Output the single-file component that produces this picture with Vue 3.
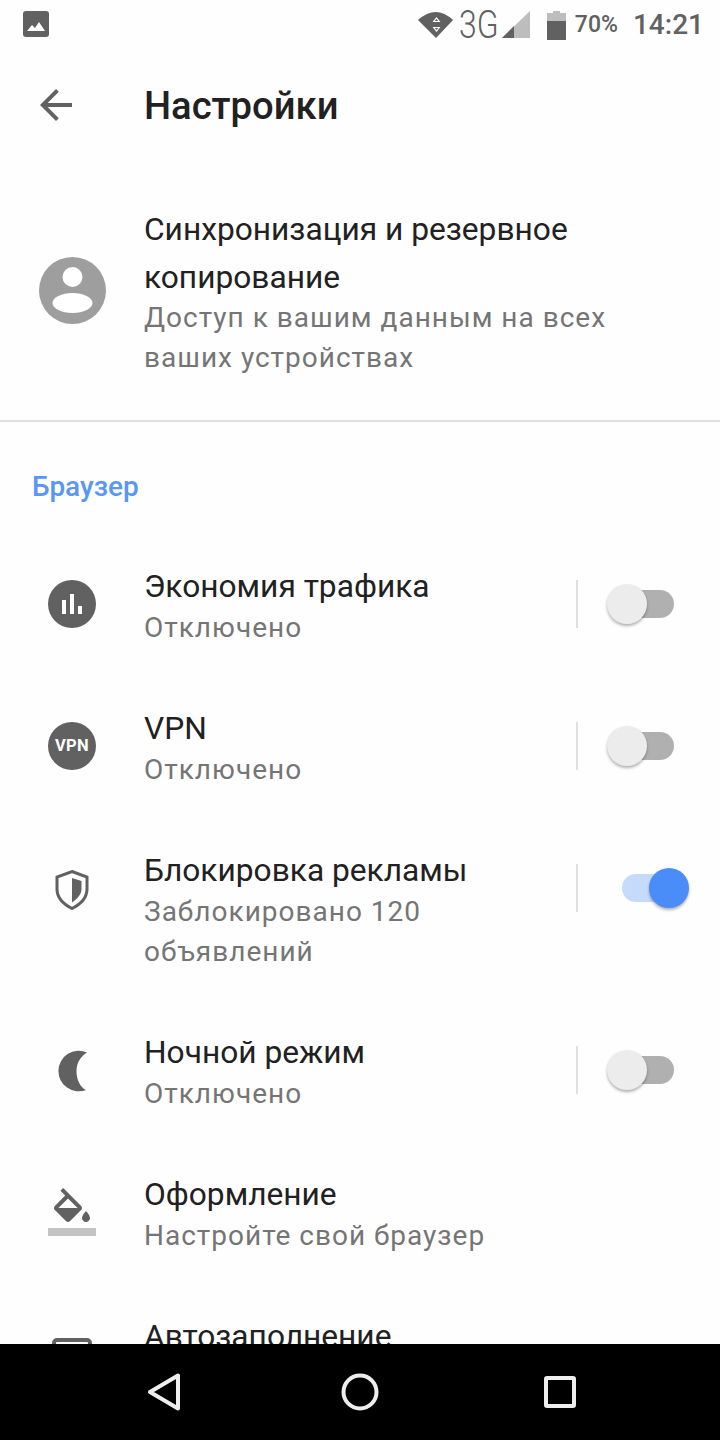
<script setup>
const rows = [
  { key: 'data', title: 'Экономия трафика', sub: 'Отключено', toggle: 'off' },
  { key: 'vpn', title: 'VPN', sub: 'Отключено', toggle: 'off' },
  { key: 'ads', title: 'Блокировка рекламы', sub: 'Заблокировано 120 объявлений', toggle: 'on' },
  { key: 'night', title: 'Ночной режим', sub: 'Отключено', toggle: 'off' },
  { key: 'theme', title: 'Оформление', sub: 'Настройте свой браузер' },
  { key: 'fill', title: 'Автозаполнение' }
]
</script>

<template>
  <div class="screen">
    <header class="status">
      <svg class="st-pic" width="26" height="26" viewBox="0 0 26 26">
        <rect width="26" height="26" rx="3" fill="#616161" />
        <path d="M4 20l5-6 3 3 4-6 6 9z" fill="#fff" />
      </svg>
      <div class="st-right">
        <svg class="st-wifi" width="36" height="28" viewBox="0 0 36 28">
          <path d="M0 9Q18-7 35 9L18 27z" fill="#616161" />
          <path d="M18.500 6l4 5h-8zM18.500 21l4-5h-8z" fill="#fff" />
          <path d="M18.500 8l1.800 2h-3.600zM18.500 19l1.800-2h-3.600z" fill="#616161" />
        </svg>
        <span class="st-net">3G</span>
        <svg class="st-sig" width="28" height="28" viewBox="0 0 28 28">
          <path d="M28 0V27H0z" fill="#bdbdbd" />
          <path d="M12 15V27H0z" fill="#616161" />
        </svg>
        <svg class="st-bat" width="19" height="29" viewBox="0 0 19 29">
          <path d="M6 0h7v2h6v8H0V2h6z" fill="#bdbdbd" />
          <rect y="10" width="19" height="19" fill="#616161" />
        </svg>
        <span class="st-pct">70%</span>
        <span class="st-time">14:21</span>
      </div>
    </header>

    <main class="content">
      <div class="toolbar">
        <svg class="back" width="48" height="48" viewBox="0 0 24 24">
          <path d="M20 11H7.830l5.590-5.590L12 4l-8 8 8 8 1.410-1.410L7.830 13H20v-2z" fill="#616161" />
        </svg>
        <h1 class="title">Настройки</h1>
      </div>

      <section class="sync">
        <svg class="avatar" width="67" height="67" viewBox="0 0 67 67">
          <circle cx="33.500" cy="33.500" r="33.500" fill="#9e9e9e" />
          <circle cx="33.500" cy="20" r="10" fill="#fff" />
          <ellipse cx="33.500" cy="46" rx="20" ry="10" fill="#fff" />
        </svg>
        <div class="sync-text">
          <div class="sync-title">Синхронизация и резервное копирование</div>
          <div class="sub sync-sub">Доступ к вашим данным на всех ваших устройствах</div>
        </div>
      </section>

      <div class="rule"></div>
      <div class="label">Браузер</div>

      <div v-for="r in rows" :key="r.key" class="row">
        <div class="icon">
          <svg v-if="r.key === 'data'" width="48" height="48" viewBox="0 0 48 48">
            <circle cx="24" cy="24" r="24" fill="#616161" />
            <path d="M14 20h4v14h-4zM22 14h4v20h-4zM30 26h4v8h-4z" fill="#fff" />
          </svg>
          <div v-else-if="r.key === 'vpn'" class="vpn">VPN</div>
          <svg v-else-if="r.key === 'ads'" width="48" height="48" viewBox="0 0 48 48">
            <path d="M24 7.500l15 5.500v12c0 8.500-6 15-15 19.500-9-4.500-15-11-15-19.500V13z" fill="none" stroke="#616161" stroke-width="3" />
            <path d="M24 14l9.500 3v8c0 5-4 10-9.500 13.500z" fill="#616161" />
          </svg>
          <svg v-else-if="r.key === 'night'" width="48" height="48" viewBox="0 0 48 48">
            <path d="M39 6.500A20.300 20.300 0 1 0 38 44C32 41 28.500 33.500 28.500 25S33 10 39 6.500z" fill="#616161" />
          </svg>
          <svg v-else-if="r.key === 'theme'" width="48" height="48" viewBox="0 0 24 24">
            <path d="M16.560 8.940L7.620 0 6.210 1.410l2.380 2.380-5.150 5.150c-.59.59-.59 1.540 0 2.120l5.500 5.500c.29.29.68.44 1.060.44s.77-.15 1.060-.44l5.500-5.500c.59-.58.59-1.530 0-2.120zM5.210 10L10 5.210 14.790 10H5.210zM19 11.500s-2 2.170-2 3.500c0 1.100.9 2 2 2s2-.9 2-2c0-1.330-2-3.500-2-3.500z" fill="#616161" />
            <rect y="20" width="24" height="4" fill="#c4c4c4" />
          </svg>
          <svg v-else width="48" height="48" viewBox="0 0 48 48">
            <rect x="6" y="10" width="36" height="30" rx="3" fill="none" stroke="#616161" stroke-width="4" />
          </svg>
        </div>
        <div class="text">
          <div class="row-title">{{ r.title }}</div>
          <div v-if="r.sub" class="sub">{{ r.sub }}</div>
        </div>
        <div v-if="r.toggle" class="ctrl">
          <span class="sep"></span>
          <span class="switch" :class="r.toggle">
            <span class="thumb"></span>
          </span>
        </div>
      </div>
    </main>

    <nav class="nav">
      <svg width="44" height="40" viewBox="0 0 44 40">
        <path d="M40 3.500V36.500L12 20z" fill="none" stroke="#eee" stroke-width="4" stroke-linejoin="round" />
      </svg>
      <svg width="40" height="40" viewBox="0 0 40 40">
        <circle cx="20" cy="20" r="16.500" fill="none" stroke="#eee" stroke-width="4" />
      </svg>
      <svg width="44" height="36" viewBox="0 0 44 36">
        <rect x="8" y="4" width="28" height="28" rx="1" fill="none" stroke="#eee" stroke-width="4" stroke-linejoin="round" />
      </svg>
    </nav>
  </div>
</template>

<style scoped>
.screen {
  width: 720px;
  height: 1440px;
  display: flex;
  flex-direction: column;
  overflow: hidden;
  background: #fefefe;
  font-family: Roboto, "Noto Sans", sans-serif;
}
.status {
  height: 48px;
  flex: none;
  display: flex;
  align-items: flex-start;
  justify-content: space-between;
  padding: 11px 16px 0 23px;
  box-sizing: border-box;
  color: #616161;
}
.st-pic { display: block; }
.st-right {
  display: flex;
  align-items: center;
  height: 28px;
}
.st-wifi { margin-right: 5px; }
.st-net {
  display: block;
  width: 39px;
  font-size: 38px;
  font-weight: 300;
  line-height: 28px;
  margin-right: 4px;
  transform: scaleX(0.84);
  transform-origin: left center;
  white-space: nowrap;
}
.st-bat { margin-left: 17px; margin-right: 9px; }
.st-pct { font-size: 23px; font-weight: 500; line-height: 28px; }
.st-time { font-size: 28px; font-weight: 500; line-height: 28px; margin-left: 15px; }
.content {
  flex: 1;
  min-height: 0;
  overflow: hidden;
}
.toolbar {
  height: 114px;
  display: flex;
  align-items: center;
  padding-left: 32px;
  box-sizing: border-box;
}
.back { margin-right: 64px; flex: none; }
.title {
  margin: 0;
  font-size: 38.200px;
  font-weight: 500;
  line-height: 46px;
  padding-top: 2px;
  color: #212121;
}
.sync {
  display: flex;
  align-items: center;
  padding: 44px 0 42px 39px;
}
.avatar { flex: none; margin: 0 38px 4px 0; }
.sync-text { width: 500px; }
.sync-title {
  font-size: 31.700px;
  line-height: 48px;
  color: #212121;
}
.sub {
  font-size: 28px;
  line-height: 40px;
  letter-spacing: 1px;
  color: #757575;
}
.sync-sub { margin-top: -4px; }
.rule { height: 2px; background: #e0e0e0; }
.label {
  padding: 45px 0 29px 32px;
  font-size: 28px;
  line-height: 40px;
  font-weight: 500;
  color: #5a97f5;
}
.row {
  display: flex;
  align-items: flex-start;
  padding: 30px 0 30px 48px;
}
.icon {
  flex: none;
  width: 48px;
  height: 48px;
  margin: 14px 48px 0 0;
}
.icon svg { display: block; }
.vpn {
  width: 48px;
  height: 48px;
  border-radius: 50%;
  background: #616161;
  color: #fff;
  font-size: 16.500px;
  font-weight: 700;
  letter-spacing: 0.300px;
  line-height: 48px;
  text-align: center;
}
.text { width: 416px; flex: none; }
.row-title {
  font-size: 31.700px;
  line-height: 42px;
  color: #212121;
}
.ctrl {
  display: flex;
  align-items: center;
  height: 48px;
  margin: 14px 0 0 16px;
}
.sep {
  width: 2px;
  height: 48px;
  background: #e0e0e0;
  margin-right: 44px;
}
.switch {
  position: relative;
  display: block;
  width: 52px;
  height: 28px;
  border-radius: 14px;
}
.switch.off { background: #b0b0b0; }
.switch.on { background: #c6dafc; }
.thumb {
  position: absolute;
  top: -6px;
  width: 40px;
  height: 40px;
  border-radius: 50%;
  box-shadow: 0 2px 3px rgba(0, 0, 0, 0.3);
}
.off .thumb { left: -15px; background: #ececec; }
.on .thumb { left: 27px; background: #4a8df8; }
.nav {
  height: 96px;
  flex: none;
  background: #000;
  display: grid;
  grid-template-columns: 44px 40px 44px;
  justify-content: space-between;
  align-items: center;
  padding: 0 138px;
  box-sizing: border-box;
}
.nav svg { display: block; }
</style>
